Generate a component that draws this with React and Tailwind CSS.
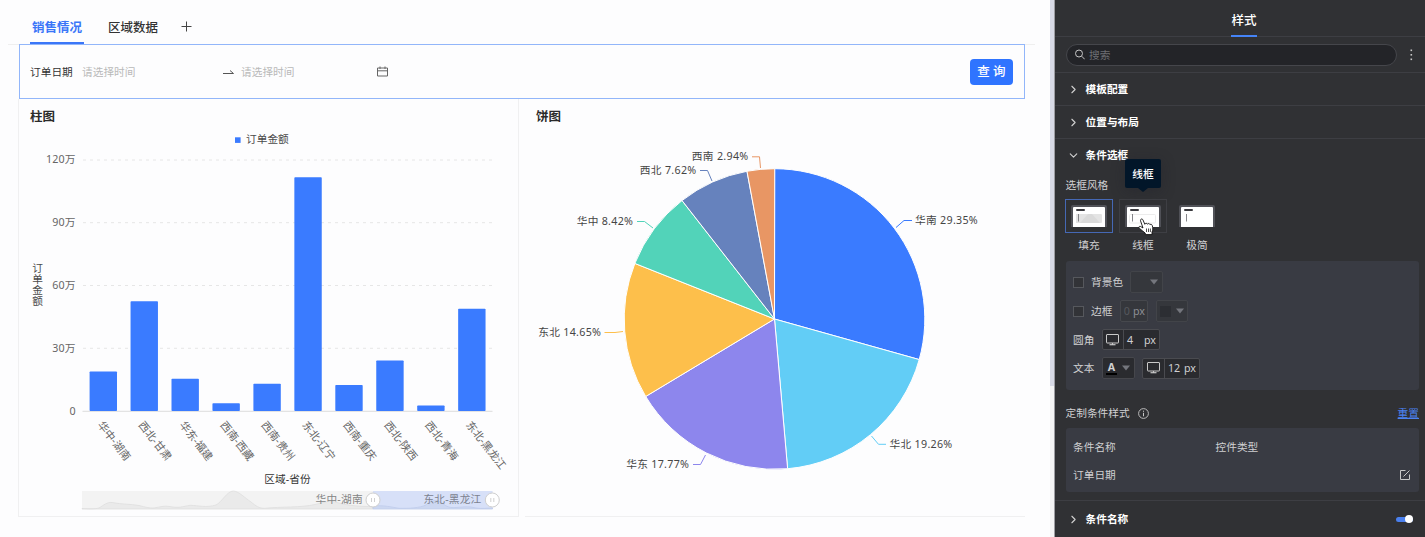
import { ChevronDown, ChevronRight } from "lucide-react";

const bars = [
  { name: "华中-湖南", top: 371.5 },
  { name: "西北-甘肃", top: 301.3 },
  { name: "华东-福建", top: 378.7 },
  { name: "西南-西藏", top: 403.2 },
  { name: "西南-贵州", top: 383.8 },
  { name: "东北-辽宁", top: 177.3 },
  { name: "西南-重庆", top: 385 },
  { name: "西北-陕西", top: 360.5 },
  { name: "西北-青海", top: 405.5 },
  { name: "东北-黑龙江", top: 308.8 },
];

const ticks = [
  { label: "120万", y: 160 },
  { label: "90万", y: 222.7 },
  { label: "60万", y: 285.5 },
  { label: "30万", y: 348.3 },
];

const slices = [
  { name: "华南 29.35%", value: 29.35, color: "#3a7bff", line: "896,227.5 904,220.5 912,220.5", x: 915, y: 224 },
  { name: "华北 19.26%", value: 19.26, color: "#62cdf6", line: "871.5,436 878.5,444.3 886,444.3", x: 889.5, y: 448 },
  { name: "华东 17.77%", value: 17.77, color: "#8d86ed", line: "705.5,455 700.5,464.5 693,464.5", x: 689.3, y: 468, end: true },
  { name: "东北 14.65%", value: 14.65, color: "#fdbf4b", line: "623,331.5 615,332.5 604.5,332.5", x: 601.3, y: 336, end: true },
  { name: "华中 8.42%", value: 8.42, color: "#52d3b9", line: "653,228 644.5,221.5 637,221.5", x: 633.3, y: 225, end: true },
  { name: "西北 7.62%", value: 7.62, color: "#6682bd", line: "712,181 707.5,170.5 700,170.5", x: 696.5, y: 174, end: true },
  { name: "西南 2.94%", value: 2.96, color: "#e89664", line: "760.5,168 759.5,156.8 752,156.8", x: 748.5, y: 160.3, end: true },
];

const CX = 774.5;
const CY = 319;
const R = 150.3;

function slicePath(start, end) {
  const a0 = (start / 100) * Math.PI * 2;
  const a1 = (end / 100) * Math.PI * 2;
  const x0 = CX + R * Math.sin(a0);
  const y0 = CY - R * Math.cos(a0);
  const x1 = CX + R * Math.sin(a1);
  const y1 = CY - R * Math.cos(a1);
  return `M${CX} ${CY}L${x0} ${y0}A${R} ${R} 0 0 1 ${x1} ${y1}Z`;
}

function Handle({ x }) {
  return (
    <g>
      <circle cx={x} cy="500" r="7" fill="#fff" stroke="#cfcfcf" />
      <path d={`M${x - 1.5} 498v4M${x + 1.5} 498v4`} stroke="#c4c4c4" strokeWidth="0.8" />
    </g>
  );
}

function BarChart() {
  return (
    <svg viewBox="19 128 499 388" className="block h-[388px] w-[499px]" fontSize="10.7" fill="#4a4a4a">
      <rect x="235" y="137.3" width="5.6" height="5.6" fill="#3a7bff" />
      <text x="246" y="143.3">订单金额</text>
      {ticks.map((t) => (
        <g key={t.label}>
          <text x="75.6" y={t.y + 3.3} textAnchor="end" letterSpacing="0.15" fill="#666">{t.label}</text>
          <path d={`M83 ${t.y}H492`} stroke="#e6e6e6" strokeDasharray="3 4" />
        </g>
      ))}
      <text x="75.6" y="414.8" textAnchor="end" fill="#666">0</text>
      <text x="37.200" y="263" className="[writing-mode:vertical-rl]">订单金额</text>
      <path d="M82.5 411.3H492.5" stroke="#dcdcdc" />
      {bars.map((b, i) => {
        const x = 103.3 + i * 40.95;
        return (
          <g key={b.name}>
            <rect x={x - 13.7} y={b.top} width="27.4" height={411 - b.top} rx="0.8" fill="#3a7bff" />
            <text transform={`translate(${x - 6.3} 425) rotate(52)`} fill="#666">{b.name}</text>
          </g>
        );
      })}
      <text x="264.2" y="483.3" letterSpacing="0.1" fill="#333">区域-省份</text>

      {/* range slider */}
      <rect x="82" y="491" width="410.5" height="18" fill="#f3f3f3" />
      <path
        d="M82 508.5C90 509 95 509 99 508C104 505 107 502 112 502.5C122 504.5 131 504 139 505.5C145 507 150 508.5 154 508C160 507 164 505.5 170 506.5C178 508.5 183 506.5 190 505.3C199 505.5 206 508 216 505C222 502 227 491 233.500 491C239 491.500 245 498 251 502C256 506 259 508.500 265 508.300C281 506.500 301 507.800 315 504.500C324 502.500 329 500 337 502.500C349 506 361 506.500 373 506.500V509H82Z"
        fill="#eaeaea"
        stroke="#dedede"
        strokeWidth="0.8"
      />
      <rect x="373" y="491" width="119.5" height="18" fill="#d7e0f8" />
      <path
        d="M373 506C384 505 391 507 399 508.300C410 508.500 419 508 426 505C431 500 437 499 442 503C447 507 450 508 456 507.500C463 507 469 506 476 508C482 509 488 508 492.500 508V509H373Z"
        fill="#ccd7f1"
        stroke="#bfcceb"
        strokeWidth="0.8"
      />
      <text x="362.8" y="503.3" textAnchor="end" letterSpacing="0.2" fill="#858585">华中-湖南</text>
      <text x="481.5" y="503.3" textAnchor="end" letterSpacing="0.2" fill="#7c828f">东北-黑龙江</text>
      <Handle x={373} />
      <Handle x={492.3} />
    </svg>
  );
}

function PieChart() {
  let sum = 0;
  return (
    <svg viewBox="525 128 500 388" className="block h-[388px] w-[500px]" fontSize="10.7" letterSpacing="0.3" fill="#454545">
      {slices.map((s) => {
        const start = sum;
        sum += s.value;
        return (
          <g key={s.name}>
            <path d={slicePath(start, sum)} fill={s.color} stroke="#fff" strokeWidth="1" strokeLinejoin="round" />
            <polyline points={s.line} fill="none" stroke={s.color} strokeWidth="1" />
            <text x={s.x} y={s.y} textAnchor={s.end ? "end" : "start"}>{s.name}</text>
          </g>
        );
      })}
    </svg>
  );
}

function Section({ title, open, children }) {
  return (
    <div className="flex h-[33px] shrink-0 items-center border-t border-[#3d3e43] pl-3 text-white">
      {open ? (
        <ChevronDown size={13} strokeWidth={2} className="text-[#d0d0d0]" />
      ) : (
        <ChevronRight size={13} strokeWidth={2} className="text-[#d0d0d0]" />
      )}
      <span className="ml-[5.5px] font-bold">{title}</span>
      {children}
    </div>
  );
}

function StyleThumb({ label, kind, className }) {
  return (
    <div className="flex w-12 flex-col items-center">
      <div className={`flex h-[34px] w-12 items-center justify-center border ${className}`}>
        <svg width="36" height="22" viewBox="0 0 36 22">
          <path d="M0 22V2Q0 0 2 0H34Q36 0 36 2V22Z" fill="#505157" />
          <path d="M2 22V3Q2 2 3 2H33Q34 2 34 3V22Z" fill="#fff" />
          <rect x="5" y="4" width="9" height="2" rx="1" fill="#3a3a3e" />
          {kind === "fill" && (
            <>
              <path d="M5 9H30Q31 9 31 10V17Q31 18 30 18H5Z" fill="#e4e4e4" />
              <path d="M17 9H21L29 18H9Z" fill="#dadada" />
            </>
          )}
          {kind === "line" && <rect x="4.500" y="9.500" width="26" height="8.500" rx="1" fill="none" stroke="#ececec" />}
          <path d="M7.500 9V16.500" stroke="#77777c" strokeWidth="0.9" />
        </svg>
      </div>
      <span className="mt-1 leading-4">{label}</span>
    </div>
  );
}

function Caret() {
  return (
    <svg width="8" height="6" viewBox="0 0 8 6" className="text-[#74767d]">
      <path d="M0 0.500H8L4 5.500Z" fill="currentColor" />
    </svg>
  );
}

function Monitor() {
  return (
    <svg width="13" height="12" viewBox="0 0 13 12" fill="none" stroke="#c9c9c9">
      <rect x="0.500" y="0.500" width="12" height="8.500" rx="0.500" />
      <path d="M6.500 9V11" />
      <path d="M3.500 10.700H9.500" strokeWidth="1.200" />
    </svg>
  );
}

export default function App() {
  return (
    <div className="flex h-[537px] w-[1425px] overflow-hidden bg-[#fdfdfe] font-['Noto_Sans','Noto_Sans_CJK_SC',sans-serif] text-[10.7px] leading-4 text-[#333]">
      <main className="w-[1050px] shrink-0">
        <nav className="ml-2 flex h-[45px] w-[1027px] items-end border-b border-[#efefef] pl-[22px] text-[12.5px]">
          <div className="flex h-[34px] w-[54px] items-center justify-center border-b-2 border-[#3a76f8] pt-1 font-bold text-[#3a76f8]">销售情况</div>
          <div className="ml-6 flex h-[34px] items-center border-b-2 border-transparent pt-1 font-medium">区域数据</div>
          <svg width="11" height="11" viewBox="0 0 11 11" className="mb-3 ml-[23px]" stroke="#444">
            <path d="M5.500 0.500V10.500M0.500 5.500H10.500" />
          </svg>
        </nav>

        <div className="-mt-px ml-[19px] flex h-[55px] w-[1006px] items-center border border-[#92b6fa] pr-[11px] pl-2.5">
          <span className="w-[52px]">订单日期</span>
          <span className="w-[141px] text-[#b9b9b9]">请选择时间</span>
          <svg width="11" height="6" viewBox="0 0 11 6" fill="none" stroke="#555">
            <path d="M0 4.500H10.500L7 1.500" />
          </svg>
          <span className="ml-[7px] w-[136px] text-[#b9b9b9]">请选择时间</span>
          <svg width="11" height="11" viewBox="0 0 11 11" fill="none" stroke="#666">
            <path d="M0.500 2H10.500V10H0.500ZM0.500 4.800H10.500M3 0.500V3M8 0.500V3" />
          </svg>
          <button className="ml-auto h-[26px] w-[43px] rounded-[4px] bg-[#2f74ff] text-[12.5px] font-medium text-white">查 询</button>
        </div>

        <div className="flex gap-1.5 pl-[18px]">
          <section className="h-[418px] w-[501px] border-x border-b border-[#f0f0f1]">
            <h2 className="h-[29px] pt-2.5 pl-[11px] text-[12.5px] font-bold text-[#2a2a2a]">柱图</h2>
            <BarChart />
          </section>
          <section className="h-[418px] w-[500px] border-b border-[#f0f0f1]">
            <h2 className="h-[29px] pt-2.5 pl-[11px] text-[12.5px] font-bold text-[#2a2a2a]">饼图</h2>
            <PieChart />
          </section>
        </div>
      </main>

      <div className="w-[5px] shrink-0 border-r border-[#9d9da2] bg-[#f4f4f5]">
        <div className="h-[386px] bg-[#d8dae6]"></div>
      </div>

      <aside className="flex w-[370px] shrink-0 flex-col bg-[#303134] text-[#d0d0d2]">
        <div className="flex h-9 shrink-0 items-end pl-[176px]">
          <div className="relative top-px flex h-[34px] w-[26px] items-center justify-center border-b-2 border-[#4584f8] pt-1 text-[12.5px] font-medium whitespace-nowrap text-white">样式</div>
        </div>
        <div className="flex h-9 shrink-0 items-center border-t border-[#3d3e43] pl-[11px]">
          <div className="flex h-[22px] w-[331px] items-center rounded-full border border-[#45464b] bg-[#232428] pl-2 text-[#6d6e73]">
            <svg width="10" height="11" viewBox="0 0 10 11" fill="none" stroke="#c5c5c5">
              <circle cx="4" cy="4.500" r="3.500" />
              <path d="M6.700 7.200L9.700 10.300" />
            </svg>
            <span className="ml-1">搜索</span>
          </div>
          <svg width="3" height="12" viewBox="0 0 3 12" fill="#c8c8c8" className="ml-[13px]">
            <rect x="0.500" y="0.500" width="1.600" height="1.600" />
            <rect x="0.500" y="5" width="1.600" height="1.600" />
            <rect x="0.500" y="9.500" width="1.600" height="1.600" />
          </svg>
        </div>
        <Section title="模板配置" />
        <Section title="位置与布局" />
        <Section title="条件选框" open />

        <p className="mt-[6px] ml-[10.5px] shrink-0">选框风格</p>
        <div className="relative mt-[6px] ml-2.5 flex shrink-0 gap-1.5">
          <StyleThumb label="填充" kind="fill" className="border-[#4568b5]" />
          <StyleThumb label="线框" kind="line" className="border-[#3e3f44]" />
          <StyleThumb label="极简" kind="plain" className="border-transparent" />

          {/* tooltip */}
          <div className="absolute -top-10 left-[60px] flex h-[29px] w-9 items-center justify-center rounded-[2px] bg-[#021629] font-medium text-white shadow-[0_3px_14px_rgba(30,30,40,0.35)]">
            线框
            <svg width="10" height="4" viewBox="0 0 10 4" className="absolute top-[29px] left-[13px]">
              <path d="M0 0H10L5 4Z" fill="#021629" />
            </svg>
          </div>

          {/* pointer */}
          <svg width="16" height="18" viewBox="0 0 16 18" className="absolute top-[19px] left-[73px]">
            <path
              d="M5 10L2.600 3C2 1 4.200 0.200 5 2L6.800 6.300C7.400 5 9 5 9.400 6.200C10.200 5.100 11.500 5.400 12 6.600C13 5.900 14 6.500 14.300 7.600C15 10 15 12.500 14 14V16.600H7.300V15.200C5.500 13.800 3.300 11.800 1.300 10.200C0.200 9.200 1.400 7.800 2.700 8.500Z"
              fill="#fff"
              stroke="#111"
              strokeWidth="0.900"
              strokeLinejoin="round"
            />
            <path d="M8.500 10.500V14M10.500 10.500V14M12.400 10.500V14" stroke="#222" strokeWidth="0.800" />
          </svg>
        </div>

        <div className="mt-2 ml-[11px] flex h-[129px] w-[353px] shrink-0 flex-col rounded-[3px] bg-[#393b43] pt-[6.5px] pl-[7px]">
          <div className="flex h-[29px] items-center">
            <span className="size-[11px] border border-[#56585d] bg-[#323337]"></span>
            <span className="ml-[7px]">背景色</span>
            <div className="ml-[7px] flex h-[22px] w-[33px] items-center justify-end rounded-[2px] border border-[#424449] bg-[#35373c] pr-[4px]">
              <Caret />
            </div>
          </div>
          <div className="flex h-[29px] items-center">
            <span className="size-[11px] border border-[#56585d] bg-[#323337]"></span>
            <span className="ml-[7px]">边框</span>
            <div className="ml-[8px] flex h-[22px] w-[28px] items-center justify-center gap-[3px] rounded-[2px] border border-[#46484d] bg-[#35373c]">
              <span className="text-[#55575d]">0</span>
              <span className="text-[#8d8f94]">px</span>
            </div>
            <div className="ml-2 flex h-[22px] w-8 items-center justify-between rounded-[2px] border border-[#424449] bg-[#35373c] pr-[3px] pl-[3px]">
              <span className="size-[11px] bg-[#2c2e33]"></span>
              <Caret />
            </div>
          </div>
          <div className="flex h-[28px] items-center">
            <span>圆角</span>
            <div className="ml-[7.5px] flex h-[21px] w-[58px] items-center rounded-[2px] border border-[#4a4b50] bg-[#2a2b2f]">
              <span className="flex h-full w-[21px] items-center justify-center border-r border-[#4a4b50]"><Monitor /></span>
              <span className="ml-[3px]">4</span>
              <span className="mr-[3px] ml-auto">px</span>
            </div>
          </div>
          <div className="flex h-[29px] items-center">
            <span>文本</span>
            <div className="ml-[7.5px] flex h-[22px] w-[33px] items-center justify-between rounded-[2px] border border-[#46474c] bg-[#2a2b2f] pr-[4px] pl-[3px]">
              <span className="w-[11px] border-b-2 border-black text-center leading-[12px] font-bold">A</span>
              <Caret />
            </div>
            <div className="ml-[7px] flex h-[21px] w-[58px] items-center rounded-[2px] border border-[#4a4b50] bg-[#2a2b2f]">
              <span className="flex h-full w-[22px] items-center justify-center border-r border-[#4a4b50]"><Monitor /></span>
              <span className="ml-[3px]">12</span>
              <span className="mr-[3px] ml-auto">px</span>
            </div>
          </div>
        </div>

        <div className="flex h-[38px] shrink-0 items-center pt-2 pr-[6px] pl-[10.5px]">
          <span>定制条件样式</span>
          <svg width="11" height="11" viewBox="0 0 11 11" fill="none" stroke="#c8c8c8" className="ml-2">
            <circle cx="5.500" cy="5.500" r="4.900" strokeWidth="0.900" />
            <path d="M5.500 4.800V8.300M5.500 2.700V3.800" />
          </svg>
          <a className="ml-auto text-[#4b82f2] underline">重置</a>
        </div>
        <div className="ml-[11px] h-16 w-[353px] shrink-0 rounded-[3px] bg-[#393b43] pt-[4.500px] pr-[9px] pl-[7px]">
          <div className="flex h-7 items-center">
            <span className="w-[142.5px]">条件名称</span>
            <span>控件类型</span>
          </div>
          <div className="flex h-[28px] items-center justify-between">
            <span>订单日期</span>
            <svg width="10" height="10" viewBox="0 0 10 10" fill="none" stroke="#c8c8c8">
              <path d="M5.500 0.500H0.500V9.500H9.500V4.500M3.500 6.500L9.500 0.500" />
            </svg>
          </div>
        </div>
        <div className="mt-2 flex h-[37px] shrink-0 items-center border-t border-[#3d3e43] pr-3 pl-3">
          <ChevronRight size={13} strokeWidth={2} className="text-[#d0d0d0]" />
          <span className="ml-[5.5px] font-bold text-white">条件名称</span>
          <span className="ml-auto flex h-[5px] w-[17px] items-center justify-end rounded-full bg-[#4a80ee]">
            <span className="size-2 shrink-0 rounded-full bg-white"></span>
          </span>
        </div>
      </aside>
    </div>
  );
}
